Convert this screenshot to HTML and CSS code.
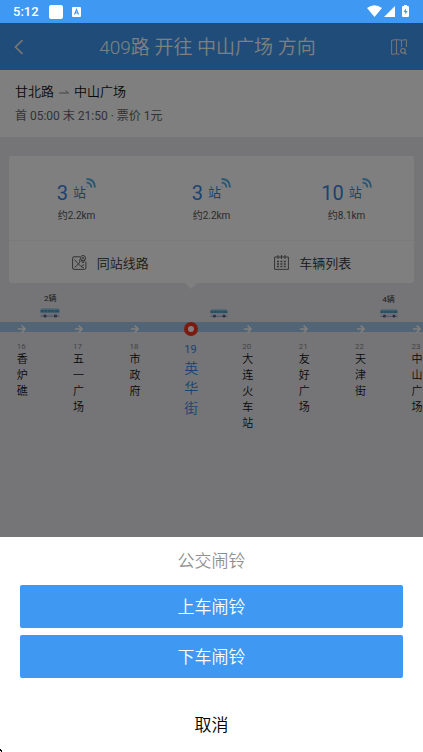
FILE: index.html
```html
<!DOCTYPE html>
<html lang="zh-CN">
<head>
<meta charset="utf-8">
<meta name="viewport" content="width=device-width, initial-scale=1">
<title>409路 开往 中山广场 方向</title>
<link rel="stylesheet" href="styles.css">
</head>
<body>
<svg class="defs" aria-hidden="true">
  <symbol id="waves" viewBox="0 0 10 10">
    <path d="M.5 1Q8.700 1 9 9.500" fill="none" stroke="currentColor" stroke-width="1.900"/>
    <path d="M.5 4.600Q5.200 4.600 5.400 9.500" fill="none" stroke="currentColor" stroke-width="1.900"/>
    <path d="M.5 7.500Q2.200 7.500 2.400 9.500H.5z" fill="currentColor" opacity=".3"/>
  </symbol>
  <symbol id="arrow" viewBox="0 0 8 8">
    <path d="M0 4H7M3.600 .5L7.100 4L3.600 7.500" fill="none" stroke="currentColor" stroke-width="1.600"/>
  </symbol>
  <symbol id="bus" viewBox="0 0 20 10">
    <path d="M1.500 .5H18Q19.500 .5 19.500 2.500V8.500H.5V2Q.5 .5 1.500 .5z" fill="#d4dcf0"/>
    <path d="M1.500 .5H18Q19 .5 19.200 1.500H.7z" fill="#7cc4e0"/>
    <path d="M.5 1.800H19.200L19.500 4.500H.5z" fill="#4a9fc4"/>
    <path d="M4 2V4.500M7.500 2V4.500M11 2V4.500M14.500 2V4.500" stroke="#8fc9de" stroke-width=".6"/>
    <path d="M.5 7.800H19.500V8.600H.5z" fill="#9a9dc0"/>
    <circle cx="5" cy="8" r="1.500" fill="#44446a"/><circle cx="5" cy="8" r=".5" fill="#ccd"/>
    <circle cx="15.500" cy="8" r="1.500" fill="#44446a"/><circle cx="15.500" cy="8" r=".5" fill="#ccd"/>
  </symbol>
</svg>
<div class="screen">
  <div class="status">
    <span class="clock">5:12</span>
    <span class="app-square"></span>
    <svg class="app-a" viewBox="0 0 9 10"><rect width="9" height="10" rx="1" fill="#fff"/><path d="M2.500 7.500L4.500 2.500L6.500 7.500M3.300 6H5.700" fill="none" stroke="#3f98f2" stroke-width="1.100"/></svg>
    <svg class="system" viewBox="0 0 43 13">
      <path d="M0 3Q7.500-2.600 15 3L7.500 12z" fill="#fff"/>
      <path d="M17 12L28 1V12z" fill="#fff"/>
      <path d="M37 0h3v1h1q1 0 1 1v9q0 1-1 1h-5q-1 0-1-1V2q0-1 1-1h1z" fill="#fff"/>
      <path d="M39 3.500L36.500 7H38.300V9.500L40.700 6H39z" fill="#3f98f2"/>
    </svg>
  </div>
  <div class="page">
    <header class="topbar">
      <button class="icon-button" aria-label="返回"><svg class="back" viewBox="0 0 10 16"><path d="M8.500 1.200L1.500 8L8.500 14.800" fill="none" stroke="currentColor" stroke-width="1.700"/></svg></button>
      <h1>409路 开往 中山广场 方向</h1>
      <button class="icon-button end" aria-label="地图"><svg class="map" viewBox="0 0 16 16" fill="none" stroke="currentColor"><path d="M.6 1.200L5.500 .6L10.500 1.200L15.400 .6V8M.6 1.200V15.400L5.500 14.800L8.500 15.300M5.500 .6V14.800M10.500 1.200V8" stroke-width="1"/><circle cx="12" cy="11.800" r="2.300" stroke-width="1.200"/><path d="M13.500 13.500L15.500 15.600" stroke-width="1.200"/></svg></button>
    </header>
    <section class="info">
      <div class="ends">甘北路<svg class="to" viewBox="0 0 10 5"><path d="M0 3H9.500L6.500 .6" fill="none" stroke="currentColor"/></svg>中山广场</div>
      <div class="times">首 05:00 末 21:50 · 票价 1元</div>
    </section>
    <section class="card">
      <div class="arrivals">
        <div class="arrival"><div class="stops"><b>3</b><span>站</span><svg class="waves"><use href="#waves"/></svg></div><div class="distance">约2.2km</div></div>
        <div class="arrival"><div class="stops"><b>3</b><span>站</span><svg class="waves"><use href="#waves"/></svg></div><div class="distance">约2.2km</div></div>
        <div class="arrival"><div class="stops"><b>10</b><span>站</span><svg class="waves"><use href="#waves"/></svg></div><div class="distance">约8.1km</div></div>
      </div>
      <div class="actions">
        <button><svg class="action-icon" viewBox="0 0 15 15" fill="none" stroke="currentColor"><path d="M8 1.800H2Q.6 1.800 .6 3.200V13Q.6 14.400 2 14.400H12.500Q13.900 14.400 13.900 13V6.500"/><circle cx="11" cy="3" r="2.500"/><circle cx="11" cy="3" r=".6"/><path d="M8.800 4.500L11 8L13.200 4.500M2.500 4.500L5 7.500L9 11.500L12 9.500M2.500 12.500L6 9.500L8 7L7.500 4.500M9 11.500L12 13"/></svg>同站线路</button>
        <button><svg class="action-icon" viewBox="0 0 15 15" fill="none" stroke="currentColor"><path d="M.6 2H14.400V14.400H.6zM4 0V4M7.500 0V4M11 0V4"/><path d="M3 6.500H12M3 9H12M3 11.500H12" stroke-width="1.500" stroke-dasharray="2 1.400"/></svg>车辆列表</button>
      </div>
    </section>
    <section class="line">
      <div class="buses">
        <div class="bus large"><span>2辆</span><svg><use href="#bus"/></svg></div>
        <div class="bus second"><svg><use href="#bus"/></svg></div>
        <div class="bus third"><span>4辆</span><svg><use href="#bus"/></svg></div>
      </div>
      <div class="track">
        <i><svg class="arrow"><use href="#arrow"/></svg></i>
        <i><svg class="arrow"><use href="#arrow"/></svg></i>
        <i><svg class="arrow"><use href="#arrow"/></svg></i>
        <i><span class="here"></span></i>
        <i><svg class="arrow"><use href="#arrow"/></svg></i>
        <i><svg class="arrow"><use href="#arrow"/></svg></i>
        <i><svg class="arrow"><use href="#arrow"/></svg></i>
        <i><svg class="arrow"><use href="#arrow"/></svg></i>
      </div>
      <ol class="stations">
        <li><div><small>16</small><span>香炉礁</span></div></li>
        <li><div><small>17</small><span>五一广场</span></div></li>
        <li><div><small>18</small><span>市政府</span></div></li>
        <li class="current"><div><small>19</small><span>英华街</span></div></li>
        <li><div><small>20</small><span>大连火车站</span></div></li>
        <li><div><small>21</small><span>友好广场</span></div></li>
        <li><div><small>22</small><span>天津街</span></div></li>
        <li><div><small>23</small><span>中山广场</span></div></li>
      </ol>
    </section>
    <div class="scrim"></div>
  </div>
  <section class="sheet" role="dialog" aria-labelledby="sheet-title">
    <h2 id="sheet-title">公交闹铃</h2>
    <button class="primary">上车闹铃</button>
    <button class="primary">下车闹铃</button>
    <button class="cancel">取消</button>
    <svg class="corner" viewBox="0 0 3 3" shape-rendering="crispEdges"><path d="M0 0H1V1H2V3H1V2H0z" fill="#000"/></svg>
  </section>
</div>
</body>
</html>
```

FILE: styles.css
```css
* { box-sizing: border-box; }
body {
  margin: 0;
  font-family: Roboto, "Noto Sans CJK SC", sans-serif;
  color: #333;
}
button {
  border: 0;
  padding: 0;
  background: none;
  font: inherit;
  color: inherit;
}
h1, h2, ol { margin: 0; padding: 0; font-weight: 400; }
svg { display: block; flex: none; }
.defs { position: absolute; width: 0; height: 0; }

.screen {
  display: flex;
  flex-direction: column;
  min-height: 100vh;
}

.status {
  display: flex;
  align-items: center;
  height: 23px;
  padding: 0 13px;
  background: #3f98f2;
  color: #fff;
}
.clock { font-size: 13px; font-weight: 500; }
.app-square {
  width: 14px;
  height: 14px;
  margin: 0 9px 0 10px;
  border-radius: 2px;
  background: #fff;
}
.app-a { width: 9px; height: 10px; }
.system { width: 43px; height: 13px; margin-left: auto; }

.page {
  position: relative;
  flex: 1;
  overflow: hidden;
  background: #ebebf0;
}
.scrim {
  position: absolute;
  inset: 0;
  background: rgba(0, 0, 0, .5);
}

.topbar {
  display: grid;
  grid-template-columns: 32px 1fr 40px;
  align-items: center;
  height: 47px;
  background: #3f98f2;
  color: #fff;
}
.topbar h1 {
  padding-top: 2px;
  font-size: 19px;
  font-weight: 350;
  line-height: 28px;
  text-align: center;
}
.icon-button { padding-left: 14px; color: #eee; }
.icon-button.end { padding: 0 0 0 8px; }
.back { width: 10px; height: 16px; }
.map { width: 16px; height: 16px; }

.info {
  padding: 12px 15px 11px;
  background: #fff;
}
.ends {
  display: flex;
  align-items: center;
  font-size: 13px;
  font-weight: 350;
  line-height: 20px;
  color: #111;
}
.to { width: 10px; height: 5px; margin: 0 5px; color: #888; }
.times { margin-top: 4px; font-size: 12px; line-height: 20px; color: #666; }

.card {
  position: relative;
  margin: 19px 9px 0;
  border-radius: 3px;
  background: #fff;
}
.card::after {
  content: "";
  position: absolute;
  top: 100%;
  left: 45%;
  transform: translateX(-50%);
  border: 6px solid transparent;
  border-top-color: #fff;
  border-bottom: 0;
}
.arrivals {
  display: grid;
  grid-template-columns: repeat(3, 1fr);
  height: 85px;
  padding-top: 22px;
  border-bottom: 1px solid #f4f4f4;
}
.arrival {
  display: flex;
  flex-direction: column;
  align-items: center;
}
.stops {
  display: flex;
  align-items: center;
  height: 30px;
  line-height: 30px;
  color: #3a85de;
}
.stops b { margin-right: 5px; font-size: 20px; font-weight: 400; }
.stops span { font-size: 13px; }
.waves { width: 10px; height: 10px; align-self: flex-start; color: #55b0e8; }
.distance { font-size: 10px; line-height: 16px; color: #555; }
.actions { display: grid; grid-template-columns: 1fr 1fr; height: 42px; }
.actions button {
  display: flex;
  align-items: center;
  justify-content: center;
  gap: 10px;
  font-size: 13px;
  font-weight: 350;
  color: #333;
}
.action-icon { width: 15px; height: 15px; color: #666; }

.line { margin-left: -6px; padding-top: 9px; }
.buses, .track, .stations {
  display: grid;
  grid-template-columns: repeat(8, calc(100vw * 2 / 15));
}
.buses {
  height: 30px;
  padding-bottom: 4px;
  margin-left: 28px;
  align-items: end;
}
.bus {
  display: flex;
  flex-direction: column;
  align-items: center;
  gap: 5px;
  font-size: 8px;
  line-height: 9px;
}
.bus svg { width: 18px; height: 9px; }
.bus.large svg { width: 20px; height: 10px; }
.second { grid-column: 4; }
.third { grid-column: 7; }
.track { height: 10px; background: #a3cbee; }
.track i { display: flex; align-items: center; justify-content: center; }
.arrow { width: 8px; height: 8px; color: #fff; }
.here {
  flex: none;
  width: 14px;
  height: 14px;
  border: 4px solid #f5361e;
  border-radius: 50%;
  background: #fff;
}
.stations { padding-top: 9px; list-style: none; }
.stations li { display: flex; justify-content: center; }
.stations div { width: 11px; }
.stations small, .stations span { display: block; }
.stations small { font-size: 8px; line-height: 11px; color: #888; }
.stations span { font-size: 11px; font-weight: 350; line-height: 16px; color: #111; overflow-wrap: anywhere; }
.stations .current div { width: 14px; }
.stations .current small { font-size: 11px; line-height: 17px; color: #3a85de; }
.stations .current span { font-size: 14px; line-height: 20px; color: #3a85de; }

.sheet {
  position: relative;
  display: flex;
  flex-direction: column;
  padding: 12px 20px 13px;
  background: #fff;
  font-size: 17px;
  font-weight: 350;
  line-height: 25px;
}
.sheet h2 {
  margin-bottom: 11px;
  font-size: 17px;
  font-weight: 350;
  text-align: center;
  color: #909090;
}
.primary {
  height: 43px;
  margin-bottom: 7px;
  padding-top: 2px;
  border-radius: 2px;
  background: #3f98f2;
  color: #fff;
}
.cancel { height: 28px; margin-top: 26px; color: #000; }
.corner { position: absolute; left: 0; bottom: 0; width: 3px; height: 3px; }
```
